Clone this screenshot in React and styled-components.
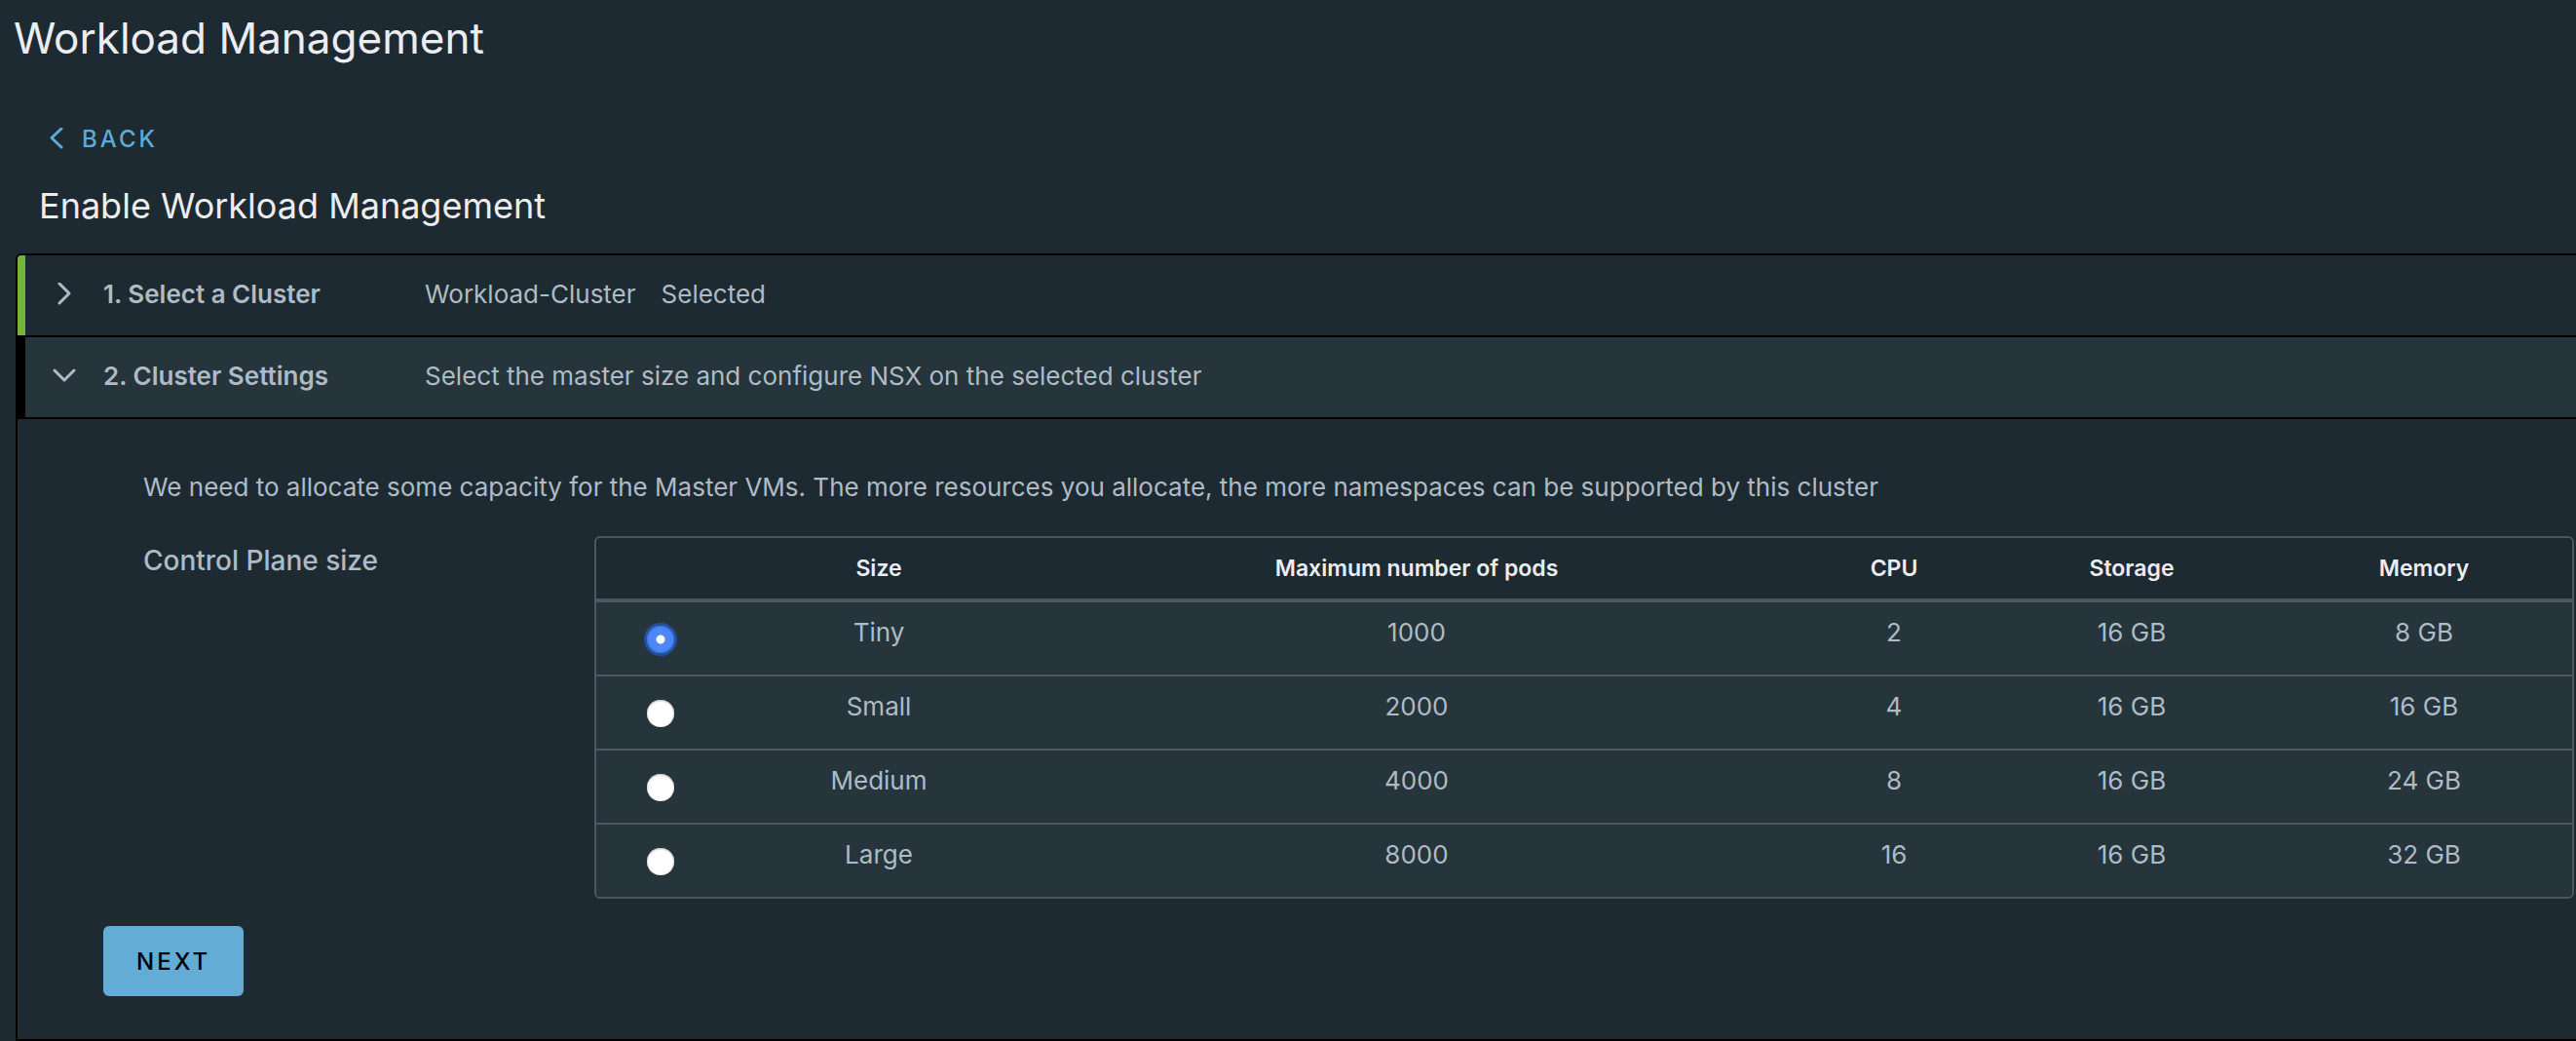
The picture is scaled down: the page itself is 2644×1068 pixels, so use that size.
import React, { useState } from "react";
import styled, { createGlobalStyle } from "styled-components";

const c = {
  page: "#1e2a32",
  raised: "#26343c",
  line: "#4b5761",
  black: "#000",
  text: "#aebbc5",
  bright: "#ebedf0",
  link: "#5fa9d6",
  action: "#63acd6",
  done: "#75b53c",
};

const GlobalStyle = createGlobalStyle`
  *, *::before, *::after { box-sizing: border-box; }
  body {
    margin: 0;
    background: ${c.page};
    color: ${c.text};
    font: 400 26px/36px Inter, "Open Sans", sans-serif;
  }
  h1, h2, h3, p, ul { margin: 0; padding: 0; font-size: inherit; font-weight: 400; }
  button { font: inherit; color: inherit; cursor: pointer; }
`;

const Page = styled.main`
  display: flex;
  flex-direction: column;
  align-items: flex-start;
  padding: 15px 0 0 16px;
`;

const PageTitle = styled.h1`
  margin-left: -2px;
  color: ${c.bright};
  font-size: 44px;
  line-height: 48px;
`;

const BackLink = styled.a`
  display: flex;
  align-items: center;
  gap: 16px;
  margin: 64px 0 30px 34px;
  color: ${c.link};
  font-size: 24px;
  font-weight: 500;
  line-height: 32px;
  letter-spacing: 3px;
  text-decoration: none;
`;

const SectionTitle = styled.h2`
  margin: 0 0 27px 24px;
  color: ${c.bright};
  font-size: 36px;
  line-height: 44px;
`;

const Accordion = styled.ul`
  align-self: stretch;
  list-style: none;
  border: 2px solid ${c.black};
  border-right: 0;
  border-radius: 6px 0 0 0;
  overflow: hidden;
`;

const Step = styled.li`
  & + & { border-top: 2px solid ${c.black}; }
`;

const StepHeader = styled.button`
  display: flex;
  align-items: center;
  width: 100%;
  height: 82px;
  padding: 0 28px 2px;
  border: 0;
  border-left: 8px solid ${(p) => (p.$done ? c.done : c.black)};
  background: ${(p) => (p.$open ? c.raised : c.page)};
  text-align: left;
`;

const StepName = styled.span`
  width: 330px;
  margin-left: 28px;
  font-weight: 600;
`;

const StepInfo = styled.span`
  display: flex;
  gap: 26px;
`;

const StepBody = styled.div`
  display: flex;
  flex-direction: column;
  align-items: flex-start;
  padding: 52px 2px 44px 88px;
  border-top: 2px solid ${c.black};
`;

const Intro = styled.p`
  margin: 0 0 32px 41px;
`;

const Field = styled.div`
  display: grid;
  grid-template-columns: 463px 1fr;
  align-items: start;
  align-self: stretch;
  margin: 0 0 28px 41px;
`;

const FieldLabel = styled.span`
  padding-top: 7px;
  font-size: 28px;
  font-weight: 500;
`;

const SizeTable = styled.table`
  width: 100%;
  table-layout: fixed;
  border: 2px solid ${c.line};
  border-radius: 6px;
  border-spacing: 0;
  overflow: hidden;
  text-align: center;
`;

const Col = styled.col`
  width: ${(p) => p.$w}px;
`;

const HeadCell = styled.th`
  height: 66px;
  padding: 0;
  border-bottom: 4px solid ${c.line};
  color: ${c.bright};
  font-size: 23px;
  font-weight: 600;
`;

const BodyRow = styled.tr`
  background: ${c.raised};
  & + & > td { height: 76px; border-top: 2px solid ${c.line}; }
`;

const Cell = styled.td`
  height: 74px;
  padding: 13px 0 0;
  vertical-align: top;
`;

const RadioCell = styled.td`
  height: 74px;
  padding: 2px 0 0;
  vertical-align: middle;
`;

const Radio = styled.input.attrs({ type: "radio" })`
  appearance: none;
  display: block;
  width: 28px;
  height: 28px;
  margin: 0 auto;
  border-radius: 50%;
  background: #fff;
  box-shadow: inset 0 1px 2px #bdbbbc, inset 0 0 1px #a9a7a8;
  cursor: pointer;

  &:checked {
    background: radial-gradient(circle, #fff 0 4px, #4d88f6 5px);
    box-shadow: inset 0 0 2px 1px #2f74ee, 0 0 0 3px #28509a;
  }
`;

const NextButton = styled.button`
  height: 72px;
  padding: 2px 34px 0;
  border: 0;
  border-radius: 6px;
  background: ${c.action};
  color: ${c.black};
  font-size: 24px;
  font-weight: 500;
  letter-spacing: 3px;
`;

const Icon = styled.svg`
  flex: none;
  fill: none;
  stroke: currentColor;
  stroke-width: 3;
  stroke-linecap: round;
  stroke-linejoin: round;
`;

const arrows = {
  left: "M13 1 3 10.500l10 9.500",
  right: "M7 1l10 10L7 21",
  down: "M2 6l10 10L22 6",
};

const Chevron = ({ to, width = 24 }) => (
  <Icon width={width} height="24" viewBox={`0 0 ${width} 24`} aria-hidden="true">
    <path d={arrows[to]} />
  </Icon>
);

const sizes = [
  ["Tiny", "1000", "2", "16 GB", "8 GB"],
  ["Small", "2000", "4", "16 GB", "16 GB"],
  ["Medium", "4000", "8", "16 GB", "24 GB"],
  ["Large", "8000", "16", "16 GB", "32 GB"],
];

const headings = ["Size", "Maximum number of pods", "CPU", "Storage", "Memory"];
const columns = [132, 316, 788, 192, 296, 304];

export default function App() {
  const [size, setSize] = useState("Tiny");

  return (
    <>
      <GlobalStyle />
      <Page>
        <PageTitle>Workload Management</PageTitle>
        <BackLink href="#back">
          <Chevron to="left" width={18} />
          BACK
        </BackLink>
        <SectionTitle>Enable Workload Management</SectionTitle>

        <Accordion>
          <Step>
            <h3>
              <StepHeader type="button" aria-expanded="false" $done>
                <Chevron to="right" />
                <StepName>1. Select a Cluster</StepName>
                <StepInfo>
                  <span>Workload-Cluster</span>
                  <span>Selected</span>
                </StepInfo>
              </StepHeader>
            </h3>
          </Step>
          <Step>
            <h3>
              <StepHeader type="button" aria-expanded="true" $open>
                <Chevron to="down" />
                <StepName>2. Cluster Settings</StepName>
                <StepInfo>
                  Select the master size and configure NSX on the selected cluster
                </StepInfo>
              </StepHeader>
            </h3>
            <StepBody>
              <Intro>
                We need to allocate some capacity for the Master VMs. The more resources you
                allocate, the more namespaces can be supported by this cluster
              </Intro>
              <Field>
                <FieldLabel id="size-label">Control Plane size</FieldLabel>
                <SizeTable role="radiogroup" aria-labelledby="size-label">
                  <colgroup>
                    {columns.map((w, i) => (
                      <Col key={i} $w={w} />
                    ))}
                  </colgroup>
                  <thead>
                    <tr>
                      <HeadCell as="td" />
                      {headings.map((h) => (
                        <HeadCell key={h} scope="col">{h}</HeadCell>
                      ))}
                    </tr>
                  </thead>
                  <tbody>
                    {sizes.map(([name, ...values]) => (
                      <BodyRow key={name}>
                        <RadioCell>
                          <Radio
                            id={`size-${name}`}
                            name="size"
                            value={name}
                            checked={size === name}
                            onChange={() => setSize(name)}
                          />
                        </RadioCell>
                        <Cell>
                          <label htmlFor={`size-${name}`}>{name}</label>
                        </Cell>
                        {values.map((v, i) => (
                          <Cell key={i}>{v}</Cell>
                        ))}
                      </BodyRow>
                    ))}
                  </tbody>
                </SizeTable>
              </Field>
              <NextButton type="button">NEXT</NextButton>
            </StepBody>
          </Step>
        </Accordion>
      </Page>
    </>
  );
}
